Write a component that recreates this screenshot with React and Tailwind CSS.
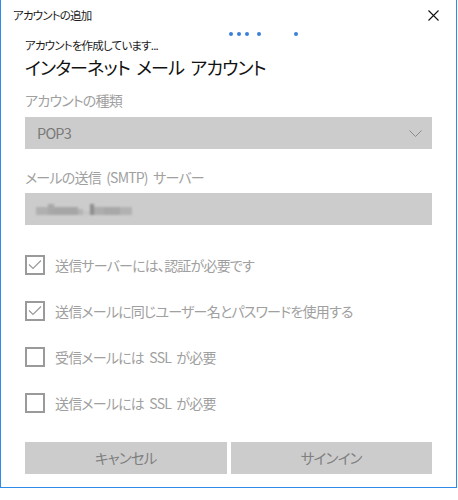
import React from 'react';

const FONT = "font-['Segoe_UI','Noto_Sans_CJK_JP',sans-serif] [font-feature-settings:'palt'] tracking-[-0.05em]";

const CHECKS = [
  { label: '送信サーバーには、認証が必要です', checked: true },
  { label: '送信メールに同じユーザー名とパスワードを使用する', checked: true },
  { label: '受信メールには\u00a0SSL\u00a0が必要', checked: false },
  { label: '送信メールには\u00a0SSL\u00a0が必要', checked: false },
];

function CheckBox({ checked }) {
  return (
    <div className="w-[20px] h-[20px] border-2 border-[#9a9a9a] shrink-0 flex items-center justify-center">
      {checked && (
        <svg width="16" height="16" viewBox="0 0 16 16" fill="none">
          <path d="M2 7.5 L6 11.5 L14 3.5" stroke="#9a9a9a" strokeWidth="1.2" />
        </svg>
      )}
    </div>
  );
}

export default function App() {
  return (
    <div className={`w-[458px] h-[500px] bg-white ${FONT}`}>
      <div className="relative w-[457px] h-[488px] border-l border-r border-b border-[#2f8bea] flex flex-col">
        <div className="h-[30px] flex items-center justify-between pl-[12px] pr-[17px]">
          <span className="text-[11.5px] leading-[16px] text-[#1a1a1a]">アカウントの追加</span>
          <svg width="11" height="11" viewBox="0 0 11 11">
            <path d="M0.5 0.5 L10.5 10.5 M10.5 0.5 L0.5 10.5" stroke="#111" strokeWidth="1.1" />
          </svg>
        </div>

        {/* progress dots */}
        <div className="absolute top-[32px] left-0">
          <span className="absolute left-[228px] w-[4px] h-[4px] rounded-full bg-[#3a80d8]" />
          <span className="absolute left-[236px] w-[4px] h-[4px] rounded-full bg-[#3a80d8]" />
          <span className="absolute left-[244px] w-[4px] h-[4px] rounded-full bg-[#3a80d8]" />
          <span className="absolute left-[256px] w-[4px] h-[4px] rounded-full bg-[#3a80d8]" />
          <span className="absolute left-[293px] w-[4px] h-[4px] rounded-full bg-[#3a80d8]" />
        </div>

        <div className="px-[24px] flex flex-col">
          <p className="mt-[7px] text-[11.5px] leading-[16px] text-[#1a1a1a]">アカウントを作成しています...</p>
          <h1 className="mt-[1px] text-[18px] leading-[26px] text-[#111] [word-spacing:3px]">インターネット メール アカウント</h1>

          <label className="mt-[10px] text-[14px] leading-[20px] text-[#a0a0a0]">アカウントの種類</label>
          <div className="mt-[7px] h-[32px] bg-[#cccccc] flex items-center justify-between pl-[12px] pr-[10px]">
            <span className="text-[14.5px] text-[#7a7a7a]">POP3</span>
            <svg width="13" height="7" viewBox="0 0 13 7" fill="none">
              <path d="M0.5 0.5 L6.5 6.5 L12.5 0.5" stroke="#8a8a8a" strokeWidth="1" />
            </svg>
          </div>

          <label className="mt-[18px] text-[14px] leading-[20px] text-[#a0a0a0] [word-spacing:3px]">メールの送信 (SMTP) サーバー</label>
          <div className="mt-[6px] h-[32px] bg-[#cccccc] flex items-center pl-[11px]">
            <div className="flex items-end blur-[1.2px]">
              <div className="w-[12px] h-[8px] bg-[#b0b0b0]" />
              <div className="w-[6px] h-[11px] bg-[#a8a8a8]" />
              <div className="w-[24px] h-[8px] bg-[#a6a6a6]" />
              <div className="w-[5px] h-[6px] bg-[#b4b4b4]" />
              <div className="w-[7px] h-[4px] bg-[#c4c4c4]" />
              <div className="w-[4px] h-[11px] bg-[#8e8e8e]" />
              <div className="w-[10px] h-[8px] bg-[#adadad]" />
              <div className="w-[16px] h-[8px] bg-[#a8a8a8]" />
              <div className="w-[12px] h-[8px] bg-[#b2b2b2]" />
            </div>
          </div>

          <div className="mt-[30px] flex flex-col gap-[26px]">
            {CHECKS.map(c => (
              <div key={c.label} className="flex items-center h-[20px] gap-[10px]">
                <CheckBox checked={c.checked} />
                <span className="text-[14px] leading-[20px] text-[#a0a0a0] whitespace-nowrap [word-spacing:3px]">{c.label}</span>
              </div>
            ))}
          </div>

          <div className="mt-[29px] flex gap-[4px]">
            <button className="flex-1 h-[32px] bg-[#cccccc] text-[14.5px] text-[#7f7f7f]">キャンセル</button>
            <button className="flex-1 h-[32px] bg-[#cccccc] text-[14.5px] text-[#7f7f7f]">サインイン</button>
          </div>
        </div>
      </div>
    </div>
  );
}
